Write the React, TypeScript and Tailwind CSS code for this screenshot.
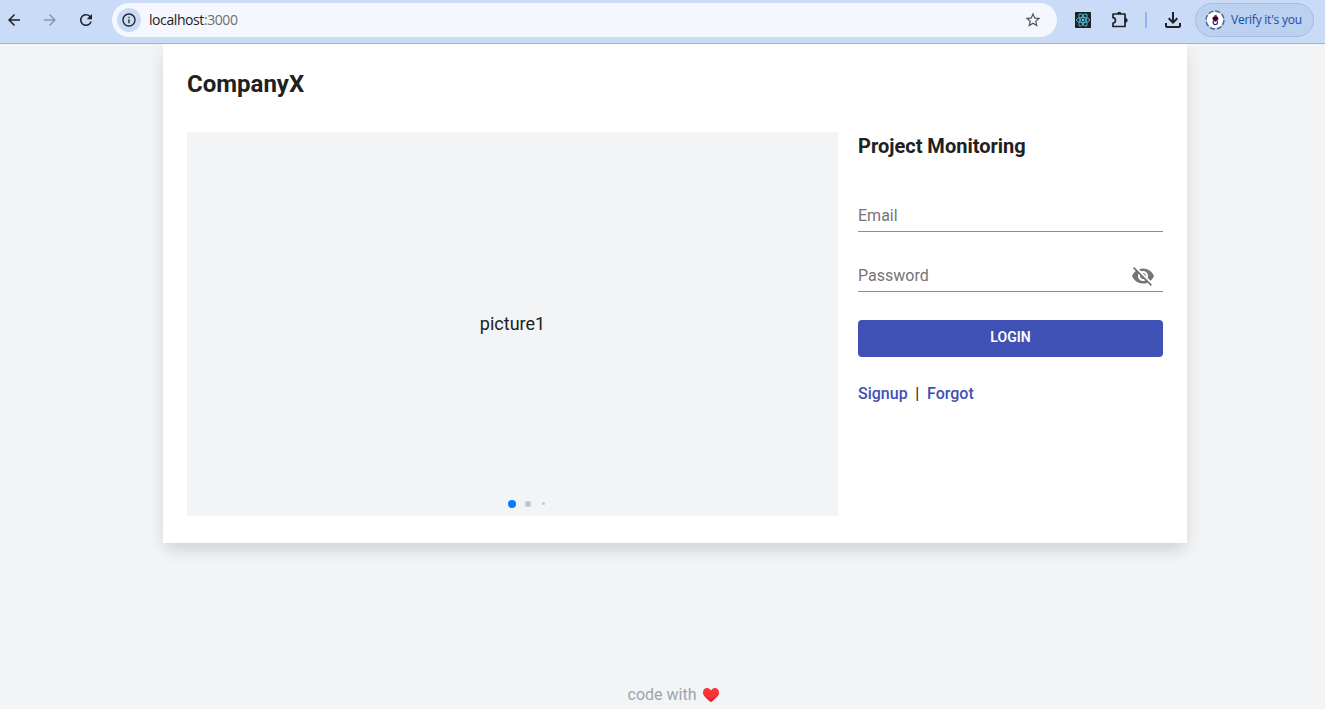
import React from "react";
import {
  MdArrowBack,
  MdArrowForward,
  MdRefresh,
  MdInfoOutline,
  MdStarBorder,
  MdOutlineFileDownload,
  MdVisibilityOff,
} from "react-icons/md";

function ReactBadge() {
  return (
    <svg viewBox="0 0 16 16" className="h-4 w-4 shrink-0">
      <rect width="16" height="16" rx="0.8" fill="#202124" />
      <g fill="none" stroke="#4fb3d0" strokeWidth="1">
        <ellipse cx="8" cy="8" rx="6.6" ry="2.6" />
        <ellipse cx="8" cy="8" rx="6.6" ry="2.6" transform="rotate(60 8 8)" />
        <ellipse cx="8" cy="8" rx="6.6" ry="2.6" transform="rotate(120 8 8)" />
      </g>
      <circle cx="8" cy="8" r="1.3" fill="#5ccfee" />
    </svg>
  );
}

function PuzzleIcon() {
  return (
    <svg viewBox="0 0 20 20" className="ml-[19px] h-5 w-5 shrink-0">
      <path
        d="M3 4H15V16.5H3V13C4.5 13 5.4 11.8 5.4 10.3S4.5 7.6 3 7.6Z"
        fill="none"
        stroke="#202124"
        strokeWidth="1.7"
        strokeLinejoin="round"
      />
      <path d="M7 4a2.2 2.2 0 0 1 4.4 0Z" fill="#202124" />
      <path d="M15 8a2.3 2.3 0 0 1 0 4.6Z" fill="#202124" stroke="#202124" strokeWidth="0.6" />
    </svg>
  );
}

function Avatar() {
  return (
    <svg viewBox="0 0 20 20" className="h-5 w-5 shrink-0">
      <circle cx="10" cy="10" r="8" fill="#fff" />
      <circle cx="10" cy="10" r="9" fill="none" stroke="#50648a" strokeWidth="1.4" strokeDasharray="5 2.07" />
      <circle cx="10.6" cy="6.5" r="1.7" fill="#d0283c" />
      <ellipse cx="10.4" cy="8.5" rx="2.9" ry="2.1" fill="#151515" />
      <ellipse cx="10.3" cy="12.3" rx="2.2" ry="2.3" fill="#fff" stroke="#3c169b" strokeWidth="1.1" />
      <rect x="9.6" y="10.2" width="1.3" height="1.6" fill="#151515" />
    </svg>
  );
}

function BrowserBar() {
  return (
    <header className="relative z-10 flex h-11 shrink-0 items-start border-b border-[#9fb2cf] bg-[#cadbf7] font-['Open_Sans',sans-serif] text-[#202124]">
      <div className="flex h-10 w-full items-center">
        <MdArrowBack className="ml-[5px] h-[18px] w-[18px]" />
        <MdArrowForward className="ml-[18px] h-[18px] w-[18px] text-[#8a96ab]" />
        <MdRefresh className="ml-[18px] h-[18px] w-[18px]" />
        <div className="ml-[17px] flex h-[34px] w-[945px] items-center rounded-full bg-[#f4f8fe] pr-[15px] pl-[5px]">
          <span className="flex h-6 w-6 items-center justify-center rounded-full bg-[#cadbf7]">
            <MdInfoOutline className="h-4 w-4" />
          </span>
          <span className="ml-2 pb-0.5 text-[14px] tracking-[-0.03em]">
            localhost<span className="text-[#6b6e73]">:3000</span>
          </span>
          <MdStarBorder className="ml-auto h-[18px] w-[18px] text-[#505256]" />
        </div>
        <div className="ml-[18px] flex items-center">
          <ReactBadge />
          <PuzzleIcon />
          <span className="ml-[15px] h-4 w-0.5 bg-[#8db4f0]" />
          <MdOutlineFileDownload className="ml-[14px] h-6 w-6" />
        </div>
        <div className="ml-[10px] flex h-[34px] w-[119px] items-center rounded-full border border-[#a6bbdf] bg-[#bcd0f0] pl-[9px]">
          <Avatar />
          <span className="ml-[6px] text-[12px] tracking-[-0.02em] whitespace-nowrap text-[#174ea6]">Verify it's you</span>
        </div>
      </div>
    </header>
  );
}

function Carousel() {
  return (
    <section className="flex h-[384px] w-[651px] flex-col bg-[#f3f4f6]">
      <div className="flex h-[384px] shrink-0 items-center justify-center text-[18px] leading-7">picture1</div>
      <div className="-mt-4 flex h-2 items-center pl-[321px]">
        <span className="h-2 w-2 rounded-full bg-[#007aff]" />
        <span className="ml-[9px] h-1.5 w-1.5 rounded-full bg-[#c4c5c7]" />
        <span className="mb-px ml-[11px] h-[3px] w-[3px] rounded-full bg-[#c4c5c7]" />
      </div>
    </section>
  );
}

function LoginForm() {
  return (
    <section className="w-[305px]">
      <h2 className="text-[20px] leading-7 font-bold">Project Monitoring</h2>
      <form>
        <div className="mt-10 flex h-8 items-center border-b border-[#8c8c8c] text-[16px] text-[#757575]">Email</div>
        <div className="mt-7 flex h-8 items-center justify-between border-b border-[#8c8c8c] pr-2 text-[16px] text-[#757575]">
          <span>Password</span>
          <MdVisibilityOff className="h-6 w-6" />
        </div>
        <button
          type="button"
          className="mt-7 flex h-[37px] w-full items-center justify-center rounded bg-[#3f51b5] pb-[2px] text-[14px] font-semibold text-white"
        >
          LOGIN
        </button>
      </form>
      <div className="mt-[25px] flex gap-2 text-[16px] leading-6 font-medium text-[#3f51b5]">
        <a>Signup</a>
        <span className="-ml-[0.5px] font-normal text-[#212121]">|</span>
        <a>Forgot</a>
      </div>
    </section>
  );
}

export default function App() {
  return (
    <div className="flex h-[709px] w-[1325px] flex-col overflow-hidden bg-[#f3f4f6] font-[Roboto,sans-serif] text-[#212121]">
      <BrowserBar />
      <main className="ml-[163px] h-[499px] w-[1024px] shrink-0 bg-white px-6 pt-6 shadow-[0_10px_15px_-3px_rgba(0,0,0,0.1),0_4px_20px_0_rgba(0,0,0,0.06)]">
        <h1 className="text-[24px] leading-8 font-bold">CompanyX</h1>
        <div className="mt-8 flex gap-5">
          <Carousel />
          <LoginForm />
        </div>
      </main>
      <footer className="mt-auto flex h-[26px] shrink-0 items-start justify-center pl-[23px] text-[16px] leading-6 text-[#9ca3af]">
        <span>code with</span>
        <svg viewBox="0 0 18 16" className="mt-1 ml-[6px] h-4 w-[18px]">
          <path
            d="M9 15C6.5 13 1 9.3 1 5.3C1 2.8 2.8 1.1 5 1.1C6.8 1.1 8.2 2 9 3.7C9.8 2 11.2 1.1 13 1.1C15.2 1.1 17 2.8 17 5.3C17 9.3 11.5 13 9 15Z"
            fill="#fb3434"
          />
          <path d="M9 15C6.5 13 1 9.3 1 5.3C2 9.2 7 11.4 10.6 11.2C13.5 10.5 15.8 7.5 17 5.3C17 9.3 11.5 13 9 15Z" fill="#e32232" />
        </svg>
      </footer>
    </div>
  );
}
